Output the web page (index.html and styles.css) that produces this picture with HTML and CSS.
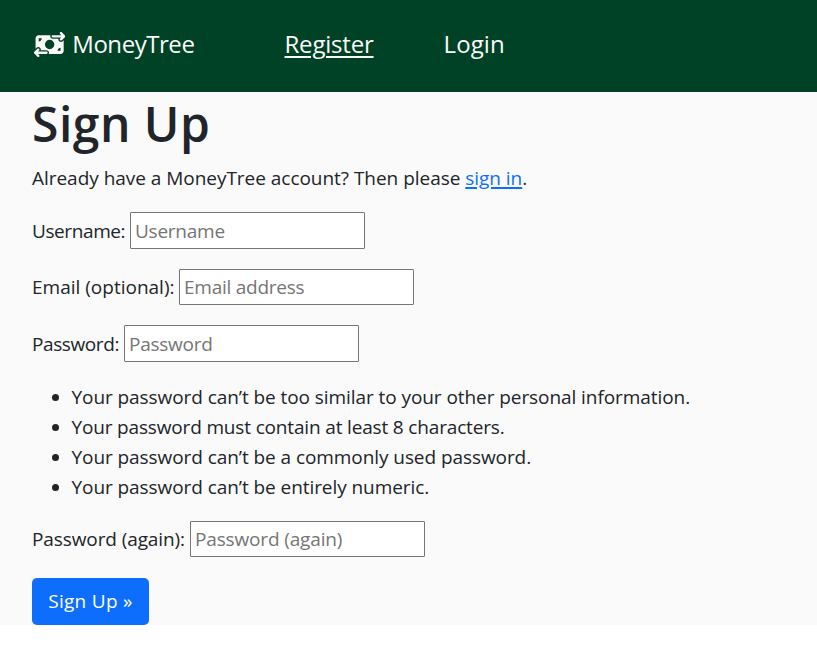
FILE: index.html
```
<!DOCTYPE html>
<html lang="en">
<head>
<meta charset="utf-8">
<title>MoneyTree</title>
<link rel="stylesheet" href="styles.css">
</head>
<body>
<nav class="navbar">
  <a class="brand" href="#">
    <svg class="brand-icon" viewBox="0 0 640 512" aria-hidden="true"><path fill="currentColor" d="M535 41c-9.4-9.4-9.4-24.6 0-33.9s24.6-9.4 33.9 0l64 64c4.5 4.5 7 10.6 7 17s-2.500 12.500-7 17l-64 64c-9.400 9.400-24.600 9.400-33.900 0s-9.400-24.600 0-33.900l23-23L384 112c-13.300 0-24-10.700-24-24s10.700-24 24-24l174.100 0L535 41zM105 377l-23 23L256 400c13.300 0 24 10.700 24 24s-10.700 24-24 24L81.900 448l23 23c9.400 9.400 9.400 24.600 0 33.900s-24.600 9.400-33.900 0L7 441c-4.500-4.500-7-10.600-7-17s2.500-12.500 7-17l64-64c9.400-9.400 24.600-9.400 33.900 0s9.400 24.600 0 33.900zM96 64H337.900c-3.700 7.200-5.900 15.300-5.900 24c0 28.700 23.300 52 52 52l117.400 0c-4 17 .6 35.500 13.800 48.800c20.300 20.300 53.200 20.300 73.500 0L608 169.500V384c0 35.300-28.700 64-64 64H302.100c3.700-7.200 5.900-15.300 5.900-24c0-28.700-23.300-52-52-52l-117.400 0c4-17-.6-35.500-13.800-48.800c-20.300-20.300-53.200-20.300-73.500 0L32 342.500V128c0-35.300 28.700-64 64-64zm64 64H96v64c35.300 0 64-28.700 64-64zM544 320c-35.300 0-64 28.700-64 64h64V320zM320 352a96 96 0 1 0 0-192 96 96 0 1 0 0 192z"/></svg>
    <span>MoneyTree</span>
  </a>
  <a class="nav-link register active" href="#">Register</a>
  <a class="nav-link login" href="#">Login</a>
</nav>
<main class="content">
  <h1>Sign Up</h1>
  <p class="intro">Already have a MoneyTree account? Then please <a href="#">sign in</a>.</p>
  <form>
    <div class="field"><label class="label-username" for="username">Username:</label><input id="username" type="text" placeholder="Username"></div>
    <div class="field"><label class="label-email" for="email">Email (optional):</label><input id="email" type="email" placeholder="Email address"></div>
    <div class="field"><label class="label-password" for="password">Password:</label><input id="password" type="password" placeholder="Password"></div>
    <ul>
      <li>Your password can’t be too similar to your other personal information.</li>
      <li class="rule-length">Your password must contain at least 8 characters.</li>
      <li>Your password can’t be a commonly used password.</li>
      <li>Your password can’t be entirely numeric.</li>
    </ul>
    <div class="field"><label class="label-again" for="again">Password (again):</label><input id="again" type="password" placeholder="Password (again)"></div>
    <button type="submit">Sign Up »</button>
  </form>
</main>
</body>
</html>
```

FILE: styles.css
```
* { box-sizing: border-box; }
body {
  margin: 0;
  background: #fff;
  color: #212529;
  font: 400 19px/30px "Open Sans", "Noto Sans", sans-serif;
}
.navbar {
  display: flex;
  align-items: center;
  height: 92px;
  padding: 0 34px 4px;
  background: #004225;
  font-size: 24px;
}
.navbar a { color: #fafafa; text-decoration: none; }
.brand { display: flex; align-items: center; gap: 7px; width: 250.5px; letter-spacing: -0.45px; }
.brand-icon { flex: none; width: 31.25px; height: 25px; }
.nav-link { width: 159px; }
.register { letter-spacing: -0.2px; }
.login { letter-spacing: 0.1px; }
.navbar .active { text-decoration: underline; text-decoration-thickness: 2px; text-underline-offset: 3px; }
.content { height: 533px; padding: 2px 32px 0; background: #fafafa; }
h1 { margin: 0 0 9px; font-size: 48px; font-weight: 600; line-height: 60px; letter-spacing: 0.5px; }
p { margin: 0 0 19px; }
.intro { letter-spacing: -0.03px; }
.intro a { color: #0d6efd; text-decoration-thickness: 2px; text-underline-offset: 2px; }
.field { display: flex; align-items: center; height: 36.5px; margin-bottom: 20px; }
.field label { flex: none; padding-top: 1px; white-space: nowrap; }
.label-username { width: 98px; letter-spacing: -0.4px; }
.label-email { width: 147px; }
.label-password { width: 92px; letter-spacing: -0.4px; }
.label-again { width: 158px; letter-spacing: -0.1px; }
input {
  width: 235px;
  height: 36.5px;
  padding: 2px 4px 1px;
  border: 1px solid #767676;
  border-radius: 1px;
  background: #fff;
  color: inherit;
  font: inherit;
  letter-spacing: -0.25px;
}
input::placeholder { color: #757575; opacity: 1; }
#again { letter-spacing: -0.15px; }
ul { margin: 0 0 19px; padding-left: 39.5px; letter-spacing: -0.07px; }
.rule-length { letter-spacing: -0.16px; }
button {
  display: block;
  width: 117px;
  height: 47px;
  margin-top: 20.5px;
  padding: 0;
  border: 0;
  border-radius: 5px;
  background: #0d6efd;
  color: #fff;
  font: inherit;
  letter-spacing: 0.3px;
}
```
